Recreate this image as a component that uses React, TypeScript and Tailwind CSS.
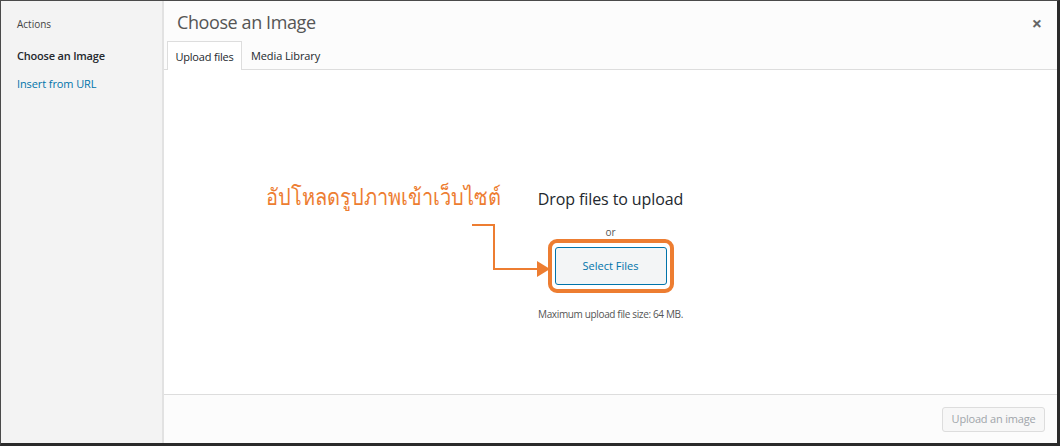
import React from "react";

export default function App() {
  const font = { fontFamily: '"Open Sans", "Noto Sans", sans-serif' };
  return (
    <div
      className="relative w-[1060px] h-[446px] border-t border-l border-[#4a4a4a] border-r-[3px] border-b-[3px] border-r-[#2a2a2a] border-b-[#2a2a2a] flex bg-white"
      style={font}
    >
      {/* Sidebar */}
      <div className="w-[163px] shrink-0 bg-[#f3f3f3] border-r-2 border-[#e2e2e2] flex flex-col pl-4 pt-[14px]">
        <div className="text-[10px] leading-[18px] text-[#444]">Actions</div>
        <div className="mt-[14px] text-[11px] leading-[18px] font-semibold tracking-[-0.2px] text-[#23282d]">Choose an Image</div>
        <div className="mt-[10px] text-[11px] leading-[18px] tracking-[-0.1px] text-[#0073aa]">Insert from URL</div>
      </div>

      {/* Main */}
      <div className="flex-1 flex flex-col min-w-0">
        <div className="bg-[#fcfcfc] border-b border-[#dddddd] h-[69px] flex flex-col relative">
          <div className="h-[40px] flex items-center pl-[13px] pt-[3px]">
            <span className="text-[18px] leading-[28px] tracking-[-0.4px] text-[#555]">Choose an Image</span>
          </div>
          <div className="flex items-end h-[29px] pl-[3px]">
            <div className="h-[29px] -mb-px w-[75px] bg-white border border-b-0 border-[#dddddd] flex items-center justify-center pt-[2px] text-[11px] tracking-[-0.2px] text-[#23282d]">
              Upload files
            </div>
            <div className="h-[28px] px-[9px] flex items-center pt-[2px] text-[11px] tracking-[-0.1px] text-[#23282d]">Media Library</div>
          </div>
          <div className="absolute right-[15px] top-[13px] text-[#666] text-[18px] leading-none font-bold">×</div>
        </div>

        <div className="flex-1 bg-white relative flex flex-col items-center pt-[117px]">
          <div className="text-[16px] leading-[24px] tracking-[-0.1px] text-[#23282d]">Drop files to upload</div>
          <div className="mt-[15px] text-[10px] leading-[12px] text-[#555]">or</div>
          <div className="mt-[1px] border-4 border-[#ed7d31] rounded-[9px] px-[3px] py-[4px]">
            <div className="w-[112px] h-[38px] rounded-[3px] border border-[#0073aa] bg-[#f3f5f6] flex items-center justify-center text-[11px] text-[#0073aa]">
              Select Files
            </div>
          </div>
          <div className="mt-[13px] text-[10px] leading-[16px] tracking-[-0.35px] text-[#555]">Maximum upload file size: 64 MB.</div>
        </div>

        <div className="h-[49px] bg-[#fcfcfc] border-t border-[#dddddd] flex items-start justify-end pr-[12px] pt-[12px]">
          <div className="h-[25px] w-[103px] rounded-[3px] border border-[#dddddd] bg-[#f7f7f7] flex items-center justify-center text-[11px] tracking-[-0.2px] text-[#a0a5aa]">
            Upload an image
          </div>
        </div>
      </div>

      {/* Annotation overlay */}
      <div
        className="absolute left-[265px] top-[184px] text-[20px] leading-[28px] text-[#ed7d31] origin-bottom scale-y-[1.15]"
        style={{ fontFamily: '"Noto Sans", "DejaVu Sans", sans-serif' }}
      >
        อัปโหลดรูปภาพเข้าเว็บไซต์
      </div>
      <svg className="absolute left-0 top-0 pointer-events-none" width="1060" height="446" viewBox="-1 -1 1060 446">
        <polyline points="470,223 492,223 492,267 537,267" fill="none" stroke="#ed7d31" strokeWidth="2" />
        <polygon points="535,259 548,267 535,275" fill="#ed7d31" />
      </svg>
    </div>
  );
}
